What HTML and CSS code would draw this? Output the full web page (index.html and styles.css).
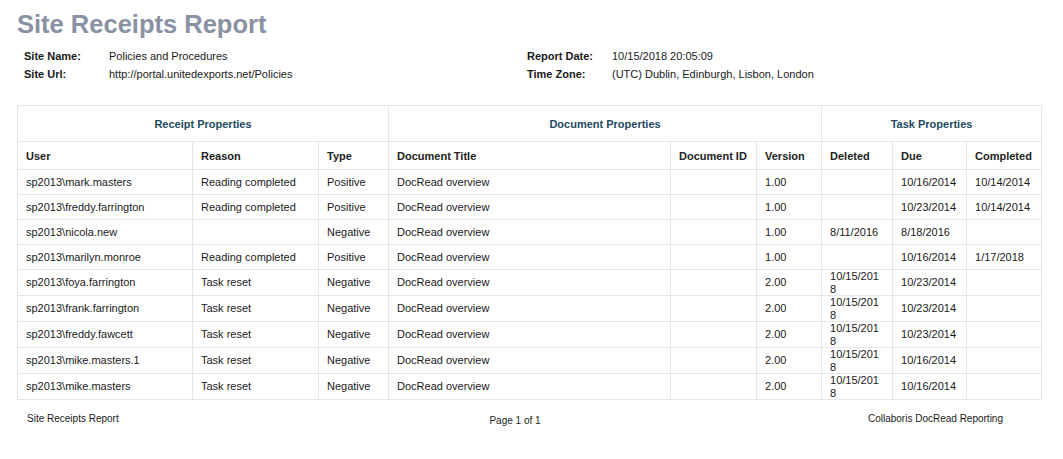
FILE: index.html
```html
<!DOCTYPE html>
<html>
<head>
<meta charset="utf-8">
<link rel="stylesheet" href="styles.css">
</head>
<body>
<div class="page">
  <h1 class="title">Site Receipts Report</h1>
  <div class="meta">
    <div class="meta-block">
      <div class="label">Site Name:</div><div class="value">Policies and Procedures</div>
      <div class="label">Site Url:</div><div class="value">http://portal.unitedexports.net/Policies</div>
    </div>
    <div class="meta-block">
      <div class="label">Report Date:</div><div class="value">10/15/2018 20:05:09</div>
      <div class="label">Time Zone:</div><div class="value">(UTC) Dublin, Edinburgh, Lisbon, London</div>
    </div>
  </div>
  <table class="report">
    <colgroup>
      <col style="width:175px"><col style="width:126px"><col style="width:70px">
      <col style="width:282px"><col style="width:86px"><col style="width:65px">
      <col style="width:71px"><col style="width:74px"><col style="width:75px">
    </colgroup>
    <thead>
      <tr class="group">
        <th colspan="3">Receipt Properties</th>
        <th colspan="3">Document Properties</th>
        <th colspan="3">Task Properties</th>
      </tr>
      <tr class="cols">
        <th>User</th><th>Reason</th><th>Type</th><th>Document Title</th><th>Document ID</th><th>Version</th><th>Deleted</th><th>Due</th><th>Completed</th>
      </tr>
    </thead>
    <tbody>
      <tr><td>sp2013\mark.masters</td><td>Reading completed</td><td>Positive</td><td>DocRead overview</td><td></td><td>1.00</td><td class="del"></td><td>10/16/2014</td><td>10/14/2014</td></tr>
      <tr><td>sp2013\freddy.farrington</td><td>Reading completed</td><td>Positive</td><td>DocRead overview</td><td></td><td>1.00</td><td class="del"></td><td>10/23/2014</td><td>10/14/2014</td></tr>
      <tr><td>sp2013\nicola.new</td><td></td><td>Negative</td><td>DocRead overview</td><td></td><td>1.00</td><td class="del">8/11/2016</td><td>8/18/2016</td><td></td></tr>
      <tr><td>sp2013\marilyn.monroe</td><td>Reading completed</td><td>Positive</td><td>DocRead overview</td><td></td><td>1.00</td><td class="del"></td><td>10/16/2014</td><td>1/17/2018</td></tr>
      <tr><td>sp2013\foya.farrington</td><td>Task reset</td><td>Negative</td><td>DocRead overview</td><td></td><td>2.00</td><td class="del">10/15/2018</td><td>10/23/2014</td><td></td></tr>
      <tr><td>sp2013\frank.farrington</td><td>Task reset</td><td>Negative</td><td>DocRead overview</td><td></td><td>2.00</td><td class="del">10/15/2018</td><td>10/23/2014</td><td></td></tr>
      <tr><td>sp2013\freddy.fawcett</td><td>Task reset</td><td>Negative</td><td>DocRead overview</td><td></td><td>2.00</td><td class="del">10/15/2018</td><td>10/23/2014</td><td></td></tr>
      <tr><td>sp2013\mike.masters.1</td><td>Task reset</td><td>Negative</td><td>DocRead overview</td><td></td><td>2.00</td><td class="del">10/15/2018</td><td>10/16/2014</td><td></td></tr>
      <tr><td>sp2013\mike.masters</td><td>Task reset</td><td>Negative</td><td>DocRead overview</td><td></td><td>2.00</td><td class="del">10/15/2018</td><td>10/16/2014</td><td></td></tr>
    </tbody>
  </table>
  <div class="footer">
    <div class="f-left">Site Receipts Report</div>
    <div class="f-center">Page 1 of 1</div>
    <div class="f-right">Collaboris DocRead Reporting</div>
  </div>
</div>
</body>
</html>
```

FILE: styles.css
```css
html, body {
  margin: 0;
  padding: 0;
  background: #ffffff;
}

body {
  font-family: "Liberation Sans", Arial, sans-serif;
  color: #1a1a1a;
  font-size: 11px;
}

.page {
  width: 1024px;
  padding: 0 0 0 17px;
}

.title {
  margin: 0;
  padding-top: 9px;
  height: 38px;
  font-size: 25.5px;
  line-height: 30px;
  font-weight: bold;
  color: #8991a2;
}

.meta {
  display: grid;
  grid-template-columns: 503px auto;
  padding-left: 7px;
  height: 58px;
}

.meta-block {
  display: grid;
  grid-template-columns: 85px auto;
  grid-auto-rows: 18px;
  align-items: center;
  align-content: start;
}

.label {
  font-weight: bold;
}

.report {
  width: 1024px;
  table-layout: fixed;
  border-collapse: collapse;
  border: 1px solid #e4e4e4;
}

.report th,
.report td {
  border: 1px solid #e6e6e6;
  padding: 0 8px 0 8px;
  text-align: left;
  vertical-align: middle;
  white-space: normal;
}

.report tr.group th {
  height: 35px;
  text-align: center;
  color: #1d4961;
  font-weight: bold;
}

.report tr.cols th {
  height: 27px;
  font-weight: bold;
  color: #222;
}

.report td {
  height: 24px;
  line-height: 12.5px;
  color: #1a1a1a;
}

.report td.del {
  word-break: break-all;
  padding-right: 10px;
}

.footer {
  display: grid;
  grid-template-columns: 1fr 1fr 1fr;
  width: 976px;
  padding: 13px 0 0 10px;
  font-size: 10px;
  color: #1a1a1a;
}

.f-center {
  text-align: center;
  padding-top: 2px;
}

.f-right {
  text-align: right;
}
```
